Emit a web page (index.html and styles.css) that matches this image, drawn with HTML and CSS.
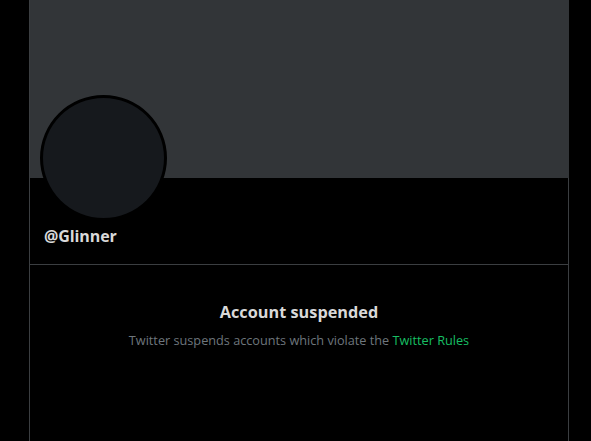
FILE: index.html
```html
<!DOCTYPE html>
<html>
<head>
<meta charset="utf-8">
<link rel="stylesheet" href="styles.css">
</head>
<body>
<main class="column">
  <div class="banner"></div>
  <section class="profile">
    <div class="avatar"></div>
    <div class="handle">@Glinner</div>
  </section>
  <section class="suspended">
    <h2 class="title">Account suspended</h2>
    <p class="desc">Twitter suspends accounts which violate the <a class="link" href="#">Twitter Rules</a></p>
  </section>
</main>
</body>
</html>
```
FILE: styles.css
```css
html, body {
  margin: 0;
  padding: 0;
  background: #000;
  height: 100%;
  overflow: hidden;
}
body {
  font-family: "Open Sans", "Noto Sans", sans-serif;
}
.column {
  margin-left: 29px;
  width: 538px;
  min-height: 441px;
  border-left: 1px solid #3b3e41;
  border-right: 1px solid #3b3e41;
  display: flex;
  flex-direction: column;
}
.banner {
  height: 178px;
  background: #323538;
  margin-right: -1px;
}
.profile {
  position: relative;
  padding: 48px 14px 0;
  height: 38px;
  border-bottom: 1px solid #3b3e41;
}
.avatar {
  position: absolute;
  left: 10px;
  top: -83px;
  width: 121px;
  height: 120px;
  border-radius: 50%;
  background: #16191d;
  border: 3px solid #000;
}
.handle {
  color: #d9d9d9;
  font-weight: 700;
  font-size: 16px;
  line-height: 20px;
  letter-spacing: -0.1px;
}
.suspended {
  text-align: center;
  padding-top: 36px;
}
.title {
  margin: 0;
  color: #d9d9d9;
  font-size: 16.3px;
  font-weight: 700;
  line-height: 22px;
}
.desc {
  margin: 8px 0 0;
  color: #6e767d;
  font-size: 12.7px;
  line-height: 18px;
}
.link {
  color: #17bf63;
  text-decoration: none;
}
```
